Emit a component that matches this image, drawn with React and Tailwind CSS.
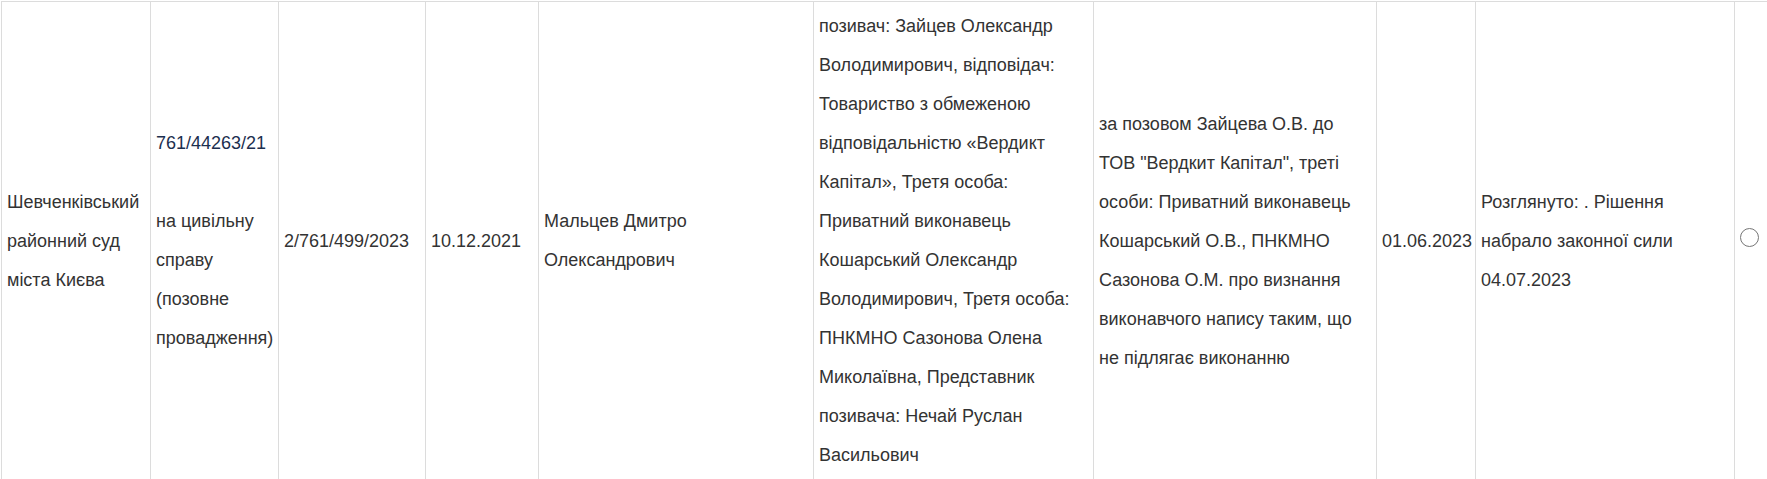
import React from "react";

const cell = "flex items-center border-r border-[#dcdcdc] px-[5px] py-[5px] shrink-0";

export default function App() {
  return (
    <div className="w-[1767px] h-[479px] overflow-hidden bg-white">
      <div
        className="ml-[1px] mt-[1px] flex border-t border-l border-[#dcdcdc] text-[18px] leading-[39px] text-[#333333] w-[1800px]"
        style={{ fontFamily: '"Liberation Sans", Arial, sans-serif' }}
      >
        <div className={`${cell} w-[149px]`}>
          <div>Шевченківський районний суд міста Києва</div>
        </div>
        <div className={`${cell} w-[128px]`}>
          <div>
            <a className="text-[#1c2f4f]">761/44263/21</a>
            <br />
            <br />
            на цивільну справу (позовне провадження)
          </div>
        </div>
        <div className={`${cell} w-[147px]`}>
          <div>2/761/499/2023</div>
        </div>
        <div className={`${cell} w-[113px]`}>
          <div>10.12.2021</div>
        </div>
        <div className={`${cell} w-[275px]`}>
          <div>Мальцев Дмитро Олександрович</div>
        </div>
        <div className={`${cell} w-[280px]`}>
          <div>
            позивач: Зайцев Олександр Володимирович, відповідач: Товариство з
            обмеженою відповідальністю «Вердикт Капітал», Третя особа:
            Приватний виконавець Кошарський Олександр Володимирович, Третя
            особа: ПНКМНО Сазонова Олена Миколаївна, Представник позивача:
            Нечай Руслан Васильович
          </div>
        </div>
        <div className={`${cell} w-[283px]`}>
          <div>
            за позовом Зайцева О.В. до ТОВ "Вердкит Капітал", треті особи:
            Приватний виконавець Кошарський О.В., ПНКМНО Сазонова О.М. про
            визнання виконавчого напису таким, що не підлягає виконанню
          </div>
        </div>
        <div className={`${cell} w-[99px]`}>
          <div>01.06.2023</div>
        </div>
        <div className={`${cell} w-[259px]`}>
          <div>Розглянуто: . Рішення набрало законної сили 04.07.2023</div>
        </div>
        <div className={`${cell} w-[60px]`}>
          <div className="w-[19px] h-[19px] rounded-full border-[1.5px] border-[#767676] -mt-[7px]" />
        </div>
      </div>
    </div>
  );
}
